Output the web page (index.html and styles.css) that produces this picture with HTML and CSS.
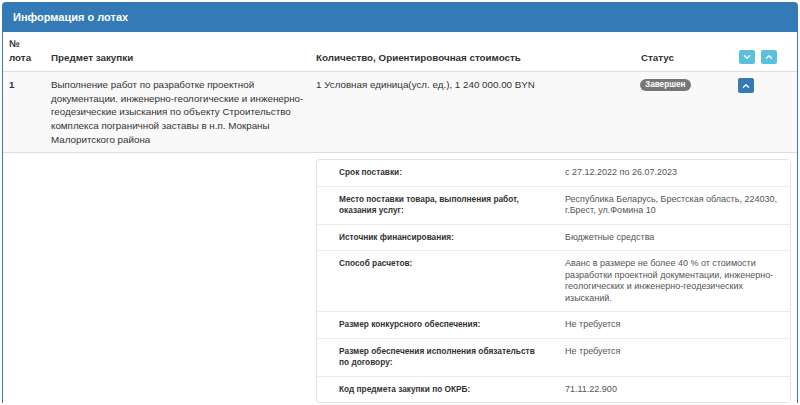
FILE: index.html
```html
<!DOCTYPE html>
<html lang="ru">
<head>
    <meta charset="UTF-8">
    <meta name="viewport" content="width=device-width, initial-scale=1.0">
    <title>Информация о лотах</title>
    <link rel="stylesheet" href="styles.css">
</head>
<body>
    <div class="panel">
        <div class="panel-heading">Информация о лотах</div>
        <table class="lots">
            <thead>
                <tr>
                    <th class="col-num">№<br>лота</th>
                    <th class="col-subject">Предмет закупки</th>
                    <th class="col-amount">Количество, Ориентировочная стоимость</th>
                    <th class="col-status">Статус</th>
                    <th class="col-actions">
                        <span class="btn btn-info">
                            <svg viewBox="0 0 10 10"><path d="M2.5 3.8 L5 6.3 L7.5 3.8"/></svg>
                        </span>
                        <span class="btn btn-info">
                            <svg viewBox="0 0 10 10"><path d="M2.5 6.2 L5 3.7 L7.5 6.2"/></svg>
                        </span>
                    </th>
                </tr>
            </thead>
            <tbody>
                <tr class="lot-row">
                    <td class="lot-num">1</td>
                    <td>Выполнение работ по разработке проектной документации. инженерно-геологические и инженерно-геодезические изыскания по объекту Строительство комплекса пограничной заставы в н.п. Мокраны Малоритского района</td>
                    <td>1 Условная единица(усл. ед.), 1 240 000.00 BYN</td>
                    <td><span class="badge">Завершен</span></td>
                    <td>
                        <span class="btn btn-primary">
                            <svg viewBox="0 0 10 10"><path d="M2.5 6.2 L5 3.7 L7.5 6.2"/></svg>
                        </span>
                    </td>
                </tr>
                <tr class="detail-row">
                    <td colspan="2"></td>
                    <td colspan="3">
                        <table class="details">
                            <tr>
                                <th>Срок поставки:</th>
                                <td>с 27.12.2022 по 26.07.2023</td>
                            </tr>
                            <tr>
                                <th>Место поставки товара, выполнения работ, оказания услуг:</th>
                                <td>Республика Беларусь, Брестская область, 224030, г.Брест, ул.Фомина 10</td>
                            </tr>
                            <tr>
                                <th>Источник финансирования:</th>
                                <td>Бюджетные средства</td>
                            </tr>
                            <tr>
                                <th>Способ расчетов:</th>
                                <td>Аванс в размере не более 40 % от стоимости разработки проектной документации, инженерно-геологических и инженерно-геодезических изысканий.</td>
                            </tr>
                            <tr>
                                <th>Размер конкурсного обеспечения:</th>
                                <td>Не требуется</td>
                            </tr>
                            <tr>
                                <th>Размер обеспечения исполнения обязательств по договору:</th>
                                <td>Не требуется</td>
                            </tr>
                            <tr>
                                <th>Код предмета закупки по ОКРБ:</th>
                                <td>71.11.22.900</td>
                            </tr>
                        </table>
                    </td>
                </tr>
            </tbody>
        </table>
    </div>
</body>
</html>
```

FILE: styles.css
```css
body {
    margin: 0;
    padding: 2px 2px 0 2px;
    font-family: "Liberation Sans", Arial, sans-serif;
    font-size: 10px;
    color: #333;
    background-color: #fff;
    overflow: hidden;
}
.panel {
    border: 1px solid #337ab7;
    border-bottom: none;
    border-radius: 4px 4px 0 0;
    background-color: #fff;
}
.panel-heading {
    background-color: #337ab7;
    color: #fff;
    font-weight: bold;
    font-size: 11px;
    height: 29px;
    line-height: 29px;
    padding: 0 10px;
}
.lots {
    width: 100%;
    border-collapse: collapse;
    table-layout: fixed;
    font-size: 9.8px;
}
.lots th,
.lots td {
    padding: 6px;
    line-height: 13.6px;
    text-align: left;
    vertical-align: top;
}
.lots thead th {
    vertical-align: bottom;
    font-weight: bold;
    border-bottom: 1px solid #ddd;
    padding-top: 5px;
    padding-bottom: 7px;
}
.col-num { width: 30px; }
.col-subject { width: 253px; }
.col-amount { width: 313px; }
.col-status { width: 86px; }
.col-actions { width: auto; }
.lot-row td {
    background-color: #f9f9f9;
    border-bottom: 1px solid #ddd;
}
.lot-num {
    font-weight: bold;
}
.btn {
    display: inline-flex;
    align-items: center;
    justify-content: center;
    width: 16px;
    height: 14px;
    border-radius: 2px;
    margin-right: 3px;
    vertical-align: middle;
}
.btn svg {
    width: 10px;
    height: 10px;
    fill: none;
    stroke: #fff;
    stroke-width: 1.4;
    stroke-linecap: round;
    stroke-linejoin: round;
}
.btn-info {
    background-color: #5bc0de;
}
.btn-primary {
    background-color: #337ab7;
    height: 15px;
    vertical-align: top;
    margin-left: -1px;
}
.badge {
    display: inline-block;
    vertical-align: top;
    margin-top: 1px;
    margin-left: -1px;
    background-color: #777;
    color: #fff;
    font-weight: bold;
    font-size: 8.2px;
    line-height: 12px;
    padding: 0 5px;
    border-radius: 6px;
}
.detail-row td {
    padding: 6px 6px 0 6px;
    background-color: #fff;
}
.details {
    width: 100%;
    border-collapse: separate;
    border-spacing: 0;
    border: 1px solid #e3e3e3;
    border-radius: 4px;
    font-size: 9px;
    table-layout: fixed;
}
.details th,
.details td {
    line-height: 11.5px;
    text-align: left;
    vertical-align: top;
    border-bottom: 1px solid #ececec;
}
.details tr:last-child th,
.details tr:last-child td {
    border-bottom: none;
}
.details th {
    width: 197px;
    padding: 7px 8px 7px 22px;
    font-size: 8.3px;
    font-weight: bold;
    color: #333;
}
.details td {
    padding: 7px 8px 7px 21px;
    color: #555;
}
```
